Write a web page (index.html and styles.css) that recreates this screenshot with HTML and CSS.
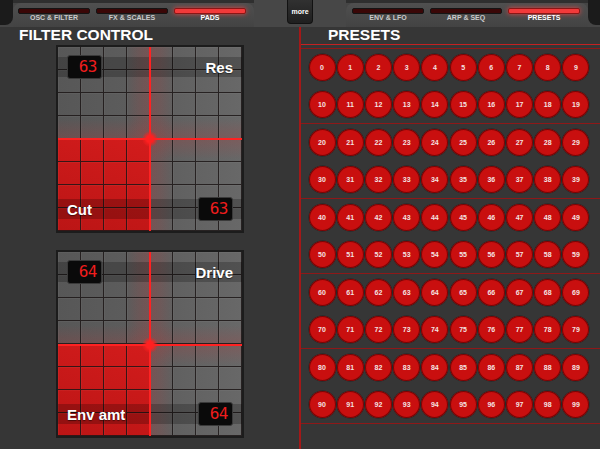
FILE: index.html
```html
<!DOCTYPE html>
<html lang="en">
<head>
  <meta charset="UTF-8" />
  <meta name="viewport" content="width=device-width, initial-scale=1.0" />
  <title>Synth - Pads</title>
  <link rel="stylesheet" href="styles.css">
</head>
<body>
  <header class="topbar">
    <div class="cap cap-left"></div>
    <nav class="tab-group">
      <div class="tab"><span class="lamp"></span><span class="tab-label">OSC &amp; FILTER</span></div>
      <div class="tab"><span class="lamp"></span><span class="tab-label">FX &amp; SCALES</span></div>
      <div class="tab active"><span class="lamp"></span><span class="tab-label">PADS</span></div>
    </nav>
    <div class="middle"><button class="more">more</button></div>
    <nav class="tab-group right">
      <div class="tab"><span class="lamp"></span><span class="tab-label">ENV &amp; LFO</span></div>
      <div class="tab"><span class="lamp"></span><span class="tab-label">ARP &amp; SEQ</span></div>
      <div class="tab active"><span class="lamp"></span><span class="tab-label">PRESETS</span></div>
    </nav>
    <div class="cap cap-right"></div>
  </header>

  <main class="main">
    <section class="filters">
      <h2 class="title">FILTER CONTROL</h2>

      <div class="pad" style="--x: 50%; --y: 50%;">
        <div class="beam-v"></div>
        <div class="beam-h"></div>
        <div class="fill"></div>
        <div class="grid-lines"></div>
        <div class="pad-row top">
          <div class="lcd">63</div>
          <span class="pad-label">Res</span>
        </div>
        <div class="pad-row bottom">
          <span class="pad-label">Cut</span>
          <div class="lcd">63</div>
        </div>
        <div class="cross-v"></div>
        <div class="cross-h"></div>
        <div class="dot"></div>
      </div>

      <div class="pad second" style="--x: 50%; --y: 50.5%;">
        <div class="beam-v"></div>
        <div class="beam-h"></div>
        <div class="fill"></div>
        <div class="grid-lines"></div>
        <div class="pad-row top">
          <div class="lcd">64</div>
          <span class="pad-label">Drive</span>
        </div>
        <div class="pad-row bottom">
          <span class="pad-label">Env amt</span>
          <div class="lcd">64</div>
        </div>
        <div class="cross-v"></div>
        <div class="cross-h"></div>
        <div class="dot"></div>
      </div>
    </section>

    <section class="presets">
      <h2 class="title">PRESETS</h2>
      <div class="preset-panel" id="presetPanel"></div>
    </section>
  </main>

  <script>
    // 8x8 cells for each pad
    document.querySelectorAll(".grid-lines").forEach(grid => {
      for (let i = 0; i < 64; i++) {
        const cell = document.createElement("div");
        cell.className = "cell";
        grid.appendChild(cell);
      }
    });

    const panel = document.getElementById("presetPanel");

    // 5 groups of 2 rows, 10 presets per row
    for (let g = 0; g < 5; g++) {
      const group = document.createElement("div");
      group.className = "preset-group";
      for (let r = 0; r < 2; r++) {
        const row = document.createElement("div");
        row.className = "preset-row";
        for (let c = 0; c < 10; c++) {
          const btn = document.createElement("button");
          btn.className = "preset";
          btn.textContent = (g * 2 + r) * 10 + c;
          row.appendChild(btn);
        }
        group.appendChild(row);
      }
      panel.appendChild(group);
    }
  </script>
</body>
</html>
```

FILE: styles.css
```css
body {
  margin: 0;
  width: 600px;
  height: 449px;
  overflow: hidden;
  background: #363636;
  font-family: 'Liberation Sans', Arial, sans-serif;
  color: #fff;
}

/* top tab bar */
.topbar {
  display: flex;
  height: 27px;
  background: linear-gradient(#2f2f2f 0 3px, #454545 3px);
}

.cap {
  width: 13px;
  height: 25px;
  background: #1b1b1b;
}

.cap-left {
  border-bottom-right-radius: 8px;
}

.cap-right {
  width: 12px;
  border-bottom-left-radius: 8px;
}

.tab-group {
  display: flex;
  width: 239px;
  padding-left: 2px;
  margin-top: 3px;
  background: linear-gradient(#4f4f4f, #434343);
  border-radius: 8px 8px 0 0;
}

.tab-group.right {
  width: 239px;
  padding-left: 3px;
}

.tab {
  width: 78px;
  display: flex;
  flex-direction: column;
  align-items: center;
  padding-top: 5px;
}

.lamp {
  width: 70px;
  height: 4px;
  background: #3a0707;
  border: 1px solid #141414;
  border-radius: 2px;
  box-sizing: content-box;
}

.tab.active .lamp {
  background: #f23a3a;
  border-color: #8a1616;
  box-shadow: 0 0 5px rgba(255, 70, 70, 0.8);
}

.tab-label {
  font-size: 7px;
  font-weight: bold;
  line-height: 8px;
  color: #cacaca;
}

.tab.active .tab-label {
  color: #fff;
}

.middle {
  flex: 1;
  display: flex;
  justify-content: center;
  background: #474747;
}

.more {
  width: 26px;
  height: 24px;
  padding: 0;
  background: linear-gradient(#313131, #1f1f1f);
  border: 1px solid #121212;
  border-top: none;
  border-radius: 0 0 4px 4px;
  color: #fff;
  font-family: 'Liberation Sans', Arial, sans-serif;
  font-size: 7px;
  font-weight: bold;
}

/* main area */
.main {
  display: flex;
  height: 422px;
}

.title {
  margin: -1px 0 0;
  font-size: 15.5px;
  line-height: 17px;
  font-weight: bold;
  color: #fff;
}

.filters {
  width: 299px;
}

.filters .title {
  padding-left: 19px;
}

/* XY pads */
.pad {
  position: relative;
  width: 188px;
  height: 188px;
  box-sizing: border-box;
  margin: 2px 0 0 56px;
  border: 2px solid #1c1c1c;
  background: linear-gradient(90deg, #575757, #5d5d5d 45%, #686868);
  overflow: hidden;
}

.pad.second {
  margin-top: 17px;
}

.beam-v {
  position: absolute;
  top: 0;
  bottom: 0;
  left: var(--x);
  width: 46px;
  transform: translateX(-50%);
  background: linear-gradient(90deg, transparent, rgba(200, 50, 50, 0.24) 50%, transparent);
}

.beam-h {
  position: absolute;
  left: 0;
  right: 0;
  top: var(--y);
  height: 40px;
  transform: translateY(-50%);
  background: linear-gradient(transparent, rgba(200, 50, 50, 0.2) 50%, transparent);
}

.fill {
  position: absolute;
  left: 0;
  bottom: 0;
  width: var(--x);
  top: var(--y);
  background: linear-gradient(20deg, #bb1515, #d31c1c);
}

.grid-lines {
  position: absolute;
  inset: 0;
  display: grid;
  grid-template-columns: repeat(8, 23px);
  grid-template-rows: repeat(8, 23px);
}

.cell {
  border-right: 1px solid rgba(28, 22, 22, 0.85);
  border-bottom: 1px solid rgba(28, 22, 22, 0.85);
  box-shadow: inset 1px 1px 0 rgba(255, 255, 255, 0.04);
}

.pad-row {
  position: absolute;
  left: 9px;
  right: 9px;
  height: 24px;
  display: flex;
  align-items: center;
  justify-content: space-between;
}

.pad-row.top {
  top: 8px;
}

.pad-row.bottom {
  bottom: 10px;
}

.pad-row::before {
  content: "";
  position: absolute;
  left: -12px;
  right: -12px;
  top: 2px;
  bottom: 2px;
  background: rgba(0, 0, 0, 0.22);
}

.lcd {
  position: relative;
  width: 35px;
  height: 24px;
  box-sizing: border-box;
  padding-right: 4px;
  background: #0a0a0a;
  border: 1px solid #3a3a3a;
  border-radius: 3px;
  font-family: 'DejaVu Sans Mono', monospace;
  font-size: 16px;
  line-height: 22px;
  text-align: right;
  color: #f01d1d;
  letter-spacing: -0.5px;
}

.pad-label {
  position: relative;
  font-size: 15px;
  font-weight: bold;
  color: #fff;
  text-shadow: 0 1px 1px rgba(0, 0, 0, 0.5);
}

.cross-v {
  position: absolute;
  top: 0;
  bottom: 0;
  left: var(--x);
  width: 2px;
  margin-left: -1px;
  background: #ff2222;
}

.cross-h {
  position: absolute;
  left: 0;
  right: 0;
  top: var(--y);
  height: 2px;
  margin-top: -1px;
  background: #ff2222;
}

.dot {
  position: absolute;
  left: var(--x);
  top: var(--y);
  width: 16px;
  height: 16px;
  margin: -8px 0 0 -8px;
  border-radius: 50%;
  background: radial-gradient(circle, #ff2020 0 30%, rgba(255, 30, 30, 0.5) 50%, transparent 72%);
}

/* presets */
.presets {
  flex: 1;
  border-left: 2px solid #a31818;
}

.presets .title {
  padding-left: 27px;
}

.preset-panel {
  margin-top: 1px;
  padding-top: 3px;
  border-top: 1px solid #c42222;
}

.preset-group {
  display: flex;
  flex-direction: column;
  gap: 10px;
  padding: 5px 10.5px 5px 7.5px;
  border-top: 1px solid #8e1818;
}

.preset-group:last-child {
  border-bottom: 1px solid #8e1818;
}

.preset-row {
  display: flex;
  justify-content: space-between;
}

.preset {
  width: 27px;
  height: 27px;
  padding: 0;
  border: none;
  border-radius: 50%;
  background: radial-gradient(circle, #c90f0f 0 58%, #b30b0b 82%, #800606 100%);
  box-shadow: inset 0 0 0 1px #760606, 0 0 0 0.5px #242424;
  color: #f4e2e2;
  font-family: 'Liberation Sans', Arial, sans-serif;
  font-size: 7px;
  font-weight: bold;
}
```
